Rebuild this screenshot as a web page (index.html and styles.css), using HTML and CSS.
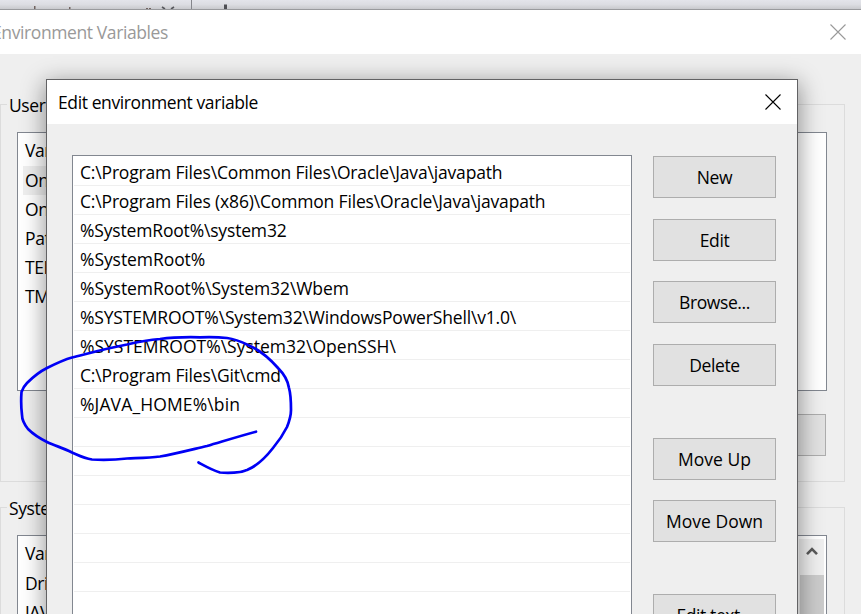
FILE: index.html
```
<!DOCTYPE html>
<html lang="en">
<head>
<meta charset="utf-8">
<title>Edit environment variable</title>
<link rel="stylesheet" href="styles.css">
</head>
<body>
<div class="backdrop">
  <svg width="861" height="9" viewBox="0 0 861 9">
    <g fill="#70625f"><rect x="34" y="6" width="1.5" height="3"/><rect x="69" y="7" width="1.5" height="2"/><rect x="146" y="8" width="2" height="1"/><rect x="149" y="8" width="2" height="1"/></g>
    <path d="M162 7l3 2M174 7l-3 2" stroke="#55565b" stroke-width="1.6"/>
    <path d="M191.500 0v9" stroke="#85868b"/>
    <path d="M225.500 4.500v4.500" stroke="#4e4f54" stroke-width="3"/>
  </svg>
</div>
<main class="window">
  <header class="titlebar muted"><span class="window-title">Environment Variables</span>
    <svg class="close" width="16" height="16" viewBox="0 0 16 16"><path d="M.5.5l15 15M15.500.5l-15 15"/></svg>
  </header>
  <div class="window-body">
    <section class="group user">
      <span class="legend">User</span>
      <ul class="variables">
        <li class="head">Var</li><li class="selected">On</li><li>On</li><li>Pat</li><li>TEM</li><li>TM</li>
      </ul>
      <div class="actions"><span class="button"></span></div>
    </section>
    <section class="group system">
      <span class="legend">Syste</span>
      <div class="variables tall">
        <ul><li class="head">Var</li><li>Dri</li><li>JAV</li></ul>
        <div class="scrollbar">
          <svg width="12" height="10" viewBox="0 0 12 10"><path d="M1 8.200l5-5 5 5" fill="none" stroke="#5a5a5a" stroke-width="2.600"/></svg>
          <i class="thumb"></i>
        </div>
      </div>
    </section>
  </div>
</main>
<div class="dialog">
  <header class="titlebar"><span>Edit environment variable</span>
    <svg class="close" width="16" height="16" viewBox="0 0 16 16"><path d="M.5.5l15 15M15.500.5l-15 15"/></svg>
  </header>
  <div class="dialog-body">
    <ul class="paths">
      <li>C:\Program Files\Common Files\Oracle\Java\javapath</li>
      <li>C:\Program Files (x86)\Common Files\Oracle\Java\javapath</li>
      <li>%SystemRoot%\system32</li>
      <li class="loose">%SystemRoot%</li>
      <li class="loose">%SystemRoot%\System32\Wbem</li>
      <li>%SYSTEMROOT%\System32\WindowsPowerShell\v1.0\</li>
      <li class="looser">%SYSTEMROOT%\System32\OpenSSH\</li>
      <li>C:\Program Files\Git\cmd</li>
      <li class="loosest">%JAVA_HOME%\bin</li>
      <li></li><li></li><li></li><li></li><li></li><li></li><li></li>
    </ul>
    <div class="buttons">
      <span class="button">New</span>
      <span class="button">Edit</span>
      <span class="button">Browse...</span>
      <span class="button">Delete</span>
      <span class="button wide apart">Move Up</span>
      <span class="button wide">Move Down</span>
      <span class="button apart">Edit text...</span>
    </div>
  </div>
</div>
<svg class="ink" width="861" height="614" viewBox="0 0 861 614">
  <path d="M256 431.700C240 436 224 441 207 446C190 450 175 454 160 456.500C149 458 138 458 127 458.500C114 460 102 460 92 459.500C83 458 78 455 72 452.500C64 448 55 446 47 442C39 438 33 434 28 429C24 424 22 420 22 415C21 407 21 399 21.500 392C23 388 24 386 27 383C33 377 39 372 47 368C55 364 63 360 72 357.500C90 353 108 348 127 344.500C138 342 149 340 160 339C174 337 187 337 200 337.300C209 337 218 337 227 338C235 339 242 342 248 345C260 350 270 359 278 368C284 374 288 381 289 388C291 395 291 403 291 410C291 416 289 422 287 427C283 435 278 442 273 448C266 457 257 466 247 470C244 471 242 472 240 472C233 473 226 473 220 472.500C212 470 205 466 198.500 462.500"/>
</svg>
</body>
</html>
```

FILE: styles.css
```
* { box-sizing: border-box; }
html { height: 614px; overflow: hidden; }
body {
  margin: 0;
  width: 861px;
  height: 614px;
  overflow: hidden;
  position: relative;
  background: #efefef;
  color: #000;
  font: 17.5px/29px "Open Sans", "Noto Sans", sans-serif;
  letter-spacing: -0.4px;
  white-space: nowrap;
}
ul { list-style: none; margin: 0; padding: 0; }
svg { display: block; }

.backdrop { height: 9px; background: linear-gradient(#e3e4ea, #dcdde2 50%, #c8c9cd); }

.window { border-top: 1px solid #999a9d; height: 605px; overflow: hidden; }
.titlebar {
  height: 44px;
  display: flex;
  align-items: center;
  justify-content: space-between;
  padding: 0 16px 0 11px;
  background: #fff;
}
.close { margin-top: -1px; }
.close path { fill: none; stroke: #000; stroke-width: 1.1; }
.muted { color: #999; padding: 0 15px 0 0; }
.muted .close path { stroke: #999; }
.window-title { margin-left: -8px; }

.window-body { padding: 50px 16px 0 0; }
.group { border: 1px solid #dcdcdc; height: 378px; padding: 0 17px 0 16px; }
.legend {
  display: block;
  width: max-content;
  margin: -14px 0 12px -10px;
  padding: 0 2px;
  background: #efefef;
}
.system { margin-top: 25px; }
.variables { height: 259px; border: 1px solid #828790; background: #fff; padding: 3px 5px; }
.variables li { height: 29px; padding-left: 2px; }
.variables li.head { height: 30px; }
.variables .selected { width: 200px; background: #efefef; }
.tall { display: flex; justify-content: space-between; padding: 3px 2px 0 5px; }
.actions { display: flex; justify-content: flex-end; margin-top: 23px; padding-right: 1px; }
.scrollbar {
  width: 25px;
  display: flex;
  flex-direction: column;
  align-items: center;
  padding-top: 7px;
  background: #efefef;
}
.thumb { width: 24px; flex: 1; margin-top: 19px; background: #cbcbcb; }
.button {
  width: 123px;
  height: 42px;
  display: flex;
  align-items: center;
  justify-content: center;
  padding-top: 1px;
  border: 1px solid #adadad;
  background: #e1e1e1;
}

.dialog {
  position: absolute;
  left: 46px;
  top: 79px;
  width: 752px;
  height: 560px;
  border: 1px solid #626264;
  background: #efefef;
  box-shadow: 0 5px 22px 1px rgba(0, 0, 0, .42);
}
.dialog-body { display: flex; gap: 21px; padding: 31px 21px 0 25px; }
.paths { width: 560px; height: 500px; padding: 1px 1px 0; border: 1px solid #828790; background: #fff; }
.paths li {
  height: 29px;
  padding-left: 6px;
  border-bottom: 1px solid #efefef;
  line-height: 30px;
  letter-spacing: -0.17px;
}
.paths .loose { letter-spacing: -0.07px; }
.paths .looser { letter-spacing: 0; }
.paths .loosest { letter-spacing: 0.13px; }
.buttons { display: flex; flex-direction: column; gap: 20.6px; padding-top: 1px; }
.apart { margin-top: 31.200px; }
.wide { letter-spacing: 0; }

.ink { position: absolute; left: 0; top: 0; }
.ink path { fill: none; stroke: #0000f5; stroke-width: 2.700; stroke-linecap: round; stroke-linejoin: round; }
```
